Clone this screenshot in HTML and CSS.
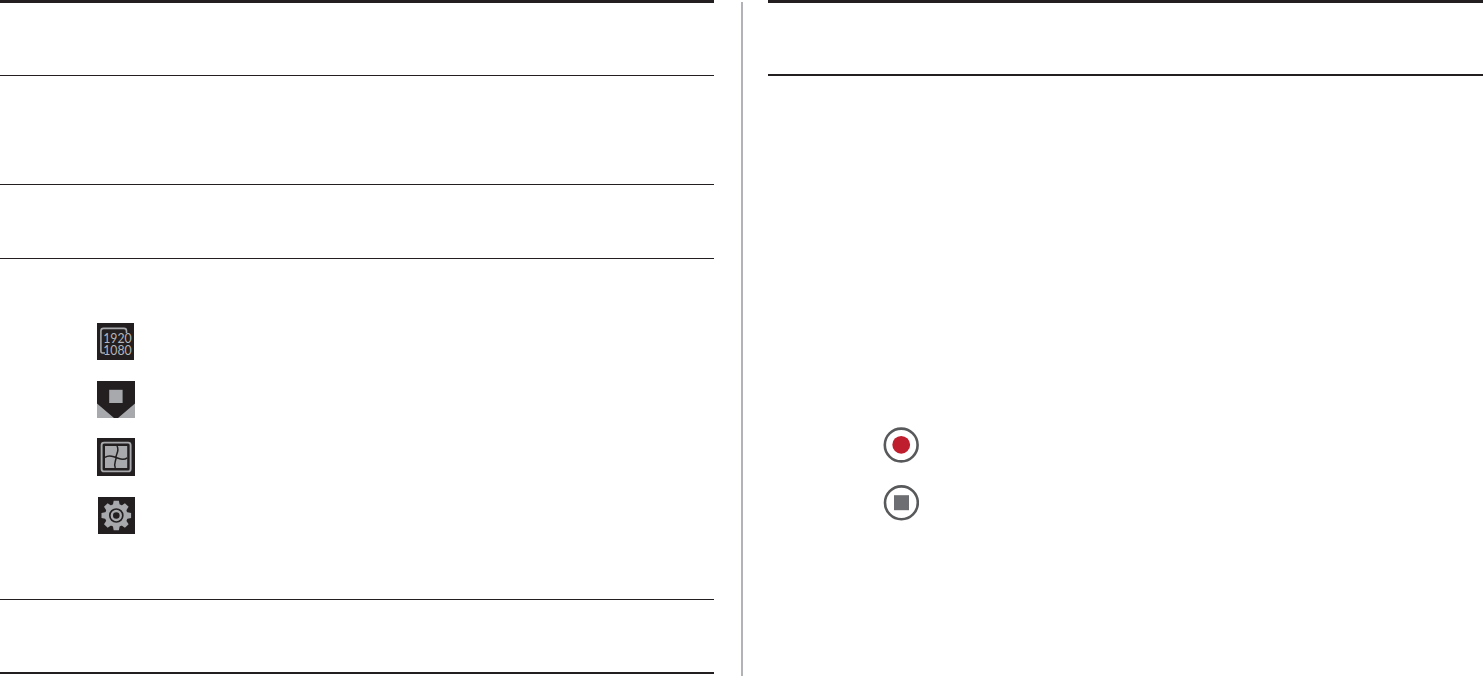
FILE: index.html
```
<!DOCTYPE html>
<html lang="en">

<head>
    <meta charset="utf-8">
    <meta name="viewport" content="width=device-width, initial-scale=1.0">
    <title>Controls</title>
    <link rel="stylesheet" href="styles.css">
</head>

<body>
    <main class="page">
        <section class="column left">
            <div class="row title"></div>
            <div class="row intro"></div>
            <div class="row subtitle"></div>
            <div class="row icons">
                <svg class="icon resolution" width="37" height="37" viewBox="0 0 37 37">
                    <rect width="37" height="37" fill="#231f20" />
                    <path d="M8 30H5.5Q3.9 30 3.9 28V8Q3.9 5.4 6.5 5.4H27Q29.5 5.4 29.5 8V10" fill="none" stroke="#a7a9ac" stroke-width="1.6" />
                    <text x="6.2" y="20.2" textLength="28.4" lengthAdjust="spacingAndGlyphs" fill="#b3b5b8">1920</text>
                    <text x="6.2" y="32.4" textLength="28.4" lengthAdjust="spacingAndGlyphs" fill="#b3b5b8">1080</text>
                </svg>
                <svg class="icon" width="38" height="37" viewBox="0 0 38 37">
                    <rect width="38" height="37" fill="#231f20" />
                    <path d="M0 22.5L17 37H0ZM38 22.5L21 37H38Z" fill="#a7a9ac" />
                    <rect x="12.2" y="8.8" width="13.4" height="13.2" fill="#a7a9ac" />
                </svg>
                <svg class="icon" width="38" height="38" viewBox="0 0 38 38">
                    <rect width="38" height="38" fill="#231f20" />
                    <rect x="4.6" y="4.6" width="29" height="28.8" rx="2.5" fill="none" stroke="#a7a9ac" stroke-width="1.9" />
                    <rect x="8" y="8" width="22.2" height="22" fill="#a7a9ac" />
                    <path d="M20 8C22.8 13 18.8 16 19 19.5S16.4 25 18.3 30M8 19.4C12.5 16 16 18.8 19 19.5S26 23 30.2 19.8" fill="none" stroke="#231f20" stroke-width="1.5" />
                </svg>
                <svg class="icon gear" width="37" height="37" viewBox="0 0 37 37">
                    <rect width="37" height="37" fill="#231f20" />
                    <g transform="translate(18.3 18.5)">
                        <g fill="#a7a9ac">
                            <circle r="11.4" />
                            <path id="teeth" d="M-3.5 -10L-2.6 -14.8H2.6L3.5 -10V10L2.6 14.8H-2.6L-3.5 10Z" />
                            <use href="#teeth" transform="rotate(45)" />
                            <use href="#teeth" transform="rotate(90)" />
                            <use href="#teeth" transform="rotate(135)" />
                        </g>
                        <circle r="6.5" fill="#a7a9ac" stroke="#231f20" stroke-width="1.7" />
                        <circle r="3.3" fill="#231f20" />
                    </g>
                </svg>
            </div>
            <div class="row closing"></div>
        </section>

        <div class="divider"></div>

        <section class="column right">
            <div class="row heading"></div>
            <div class="buttons">
                <svg class="icon" width="36" height="36" viewBox="0 0 36 36">
                    <circle cx="18.2" cy="18" r="16.4" fill="none" stroke="#58595b" stroke-width="2.6" />
                    <circle cx="18.2" cy="17.8" r="8.9" fill="#be1e2d" />
                </svg>
                <svg class="icon" width="36" height="36" viewBox="0 0 36 36">
                    <circle cx="18.4" cy="17.8" r="16.4" fill="none" stroke="#58595b" stroke-width="2.6" />
                    <rect x="11" y="10.2" width="15" height="15" fill="#6d6e71" />
                </svg>
            </div>
        </section>
    </main>
</body>

</html>
```

FILE: styles.css
```
* {
    box-sizing: border-box;
}

body {
    margin: 0;
    background-color: white;
    font-family: Lato, sans-serif;
}

.page {
    display: flex;
    height: 676px;
    overflow: hidden;
}

.column {
    border-top: 3px solid #231f20;
}

.left {
    width: 714px;
}

.right {
    flex: 1;
}

.divider {
    width: 2px;
    height: 674px;
    margin: 2px 25px 0 27px;
    background-color: #b1b3b6;
}

.row {
    border-bottom: 1px solid #231f20;
}

.title {
    height: 73px;
}

.intro {
    height: 109px;
}

.subtitle {
    height: 74px;
}

.icons {
    display: flex;
    flex-direction: column;
    height: 341px;
    gap: 21px;
    padding: 64px 0 0 97px;
}

.icon {
    display: block;
    flex-shrink: 0;
}

.icons .icon:nth-child(3) {
    margin-top: -1px;
}

.gear {
    margin-left: 1px;
}

.resolution text {
    font-size: 13px;
}

.closing {
    height: 74px;
    border-bottom-width: 2px;
}

.heading {
    height: 73px;
    border-bottom-width: 2px;
}

.buttons {
    display: flex;
    flex-direction: column;
    gap: 22px;
    padding: 351px 0 0 115px;
}
```
